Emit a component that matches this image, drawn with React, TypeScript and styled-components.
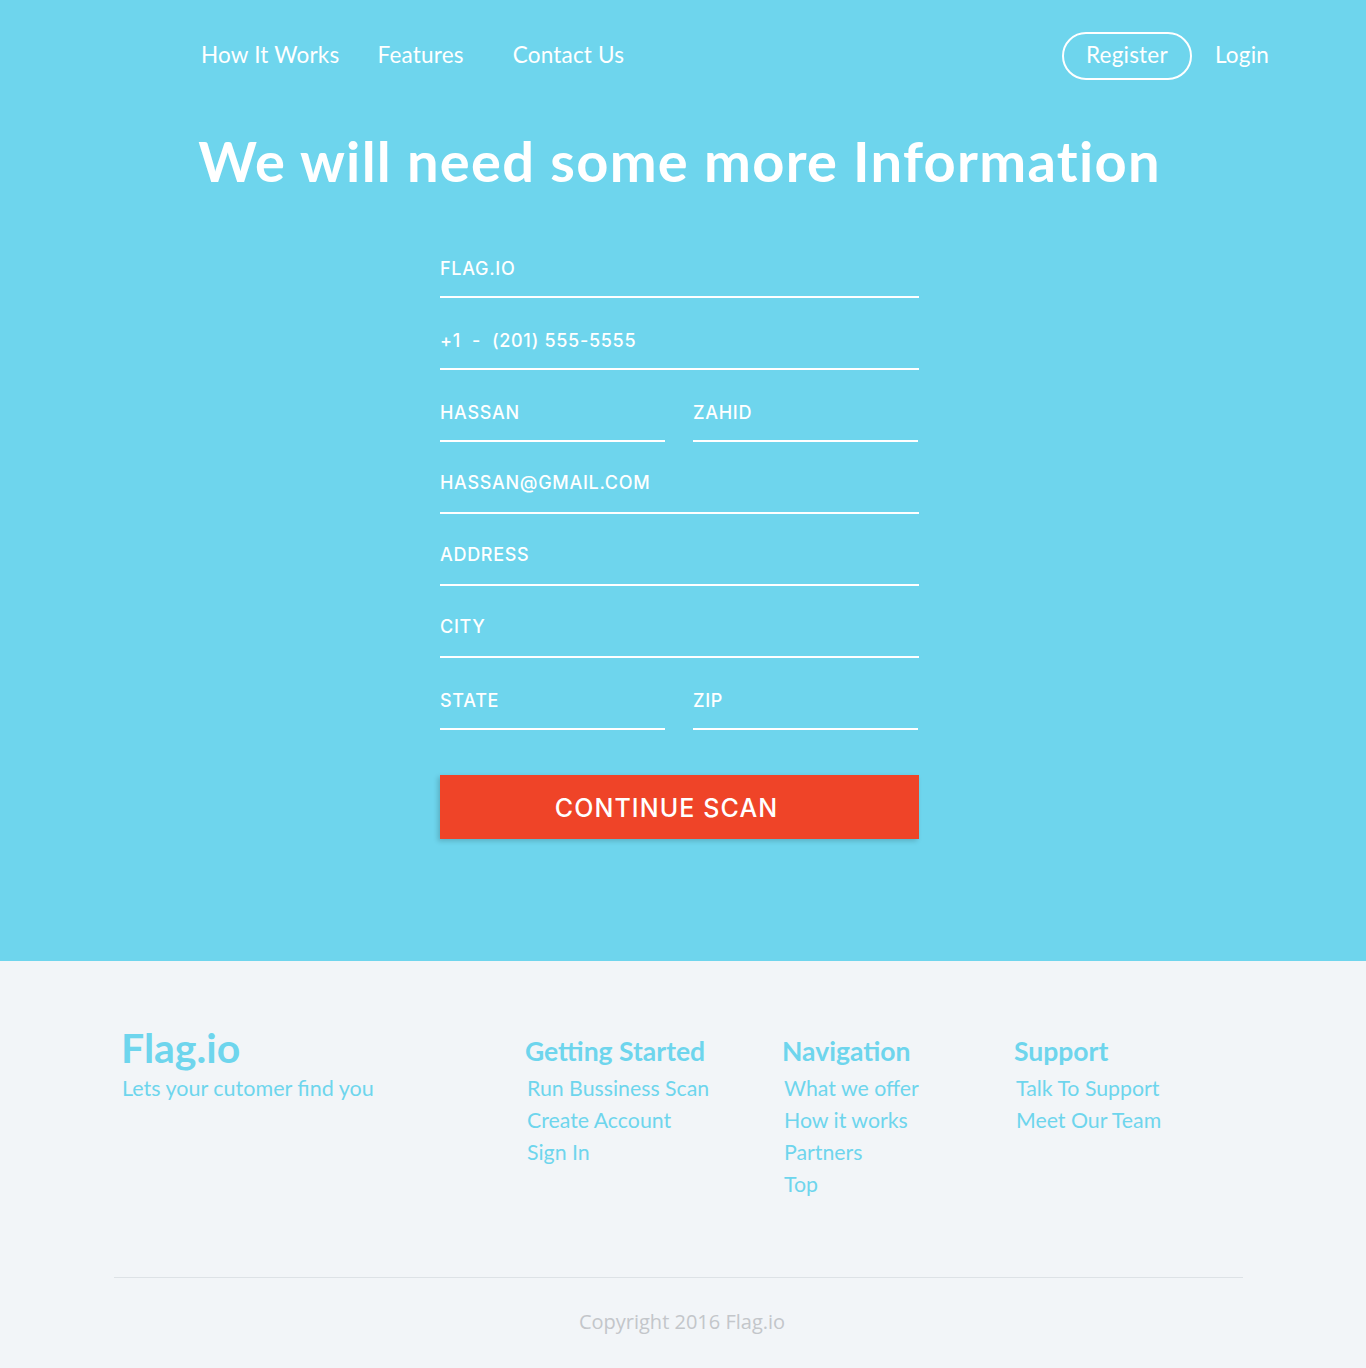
import React from "react";
import styled, { createGlobalStyle } from "styled-components";

const GlobalStyle = createGlobalStyle`
  html, body { margin: 0; padding: 0; }
  body { background: #f2f5f8; font-family: "Lato", "Liberation Sans", sans-serif; }
  * { box-sizing: border-box; }
`;

const BLUE = "#6ed5ed";

const Hero = styled.section`
  background: ${BLUE};
  height: 961px;
  display: flex;
  flex-direction: column;
`;

const Nav = styled.nav`
  display: flex;
  align-items: center;
  justify-content: space-between;
  padding: 32px 97px 0 201px;
  height: 80px;
`;

const NavGroup = styled.div`
  display: flex;
  align-items: center;
`;

const NavLink = styled.a<{ $gap?: number }>`
  color: #fff;
  font-family: "Lato", sans-serif;
  font-size: 22.5px;
  font-weight: 400;
  letter-spacing: 0.2px;
  text-decoration: none;
  margin-left: ${(p) => p.$gap ?? 0}px;
  line-height: 46px;
  padding-bottom: 2px;
`;

const RegisterButton = styled.a`
  display: inline-flex;
  align-items: center;
  justify-content: center;
  width: 130px;
  height: 48px;
  padding-bottom: 3px;
  border: 2px solid #fff;
  border-radius: 24px;
  color: #fff;
  font-family: "Lato", sans-serif;
  font-size: 22.5px;
  letter-spacing: 0.2px;
  text-decoration: none;
  margin-right: 23px;
`;

const Content = styled.div`
  display: flex;
  flex-direction: column;
  align-items: center;
  padding-right: 7px;
`;

const Title = styled.h1`
  margin: 48px 0 0;
  color: #fff;
  font-family: "Lato", sans-serif;
  font-weight: 700;
  font-size: 56px;
  line-height: 65px;
  letter-spacing: 1.3px;
`;

const Form = styled.form`
  width: 479px;
  margin-top: 33px;
  display: flex;
  flex-direction: column;
`;

const Row = styled.div`
  display: grid;
  grid-template-columns: 225px 225px;
  column-gap: 28px;
`;

const Field = styled.div<{ $pt?: number }>`
  height: 72px;
  padding-top: ${(p) => p.$pt ?? 33}px;
  border-bottom: 2px solid #fff;
  color: #fff;
  font-family: "Inter", "Liberation Sans", sans-serif;
  font-weight: 500;
  font-size: 18px;
  line-height: 20px;
  letter-spacing: 0.7px;
  white-space: pre;
`;

const Button = styled.button`
  margin-top: 45px;
  width: 479px;
  height: 64px;
  border: none;
  background: #ef4428;
  color: #fff;
  font-family: "Inter", "Liberation Sans", sans-serif;
  font-weight: 500;
  font-size: 25px;
  letter-spacing: 1.1px;
  padding: 2px 26px 0 0;
  box-shadow: -2px 2px 5px rgba(0, 0, 0, 0.18);
  cursor: pointer;
`;

const Footer = styled.footer`
  background: #f2f5f8;
  height: 407px;
  padding-top: 63px;
  display: flex;
  flex-direction: column;
`;

const FooterGrid = styled.div`
  display: grid;
  grid-template-columns: 404px 257px 232px 1fr;
  padding-left: 121px;
  height: 165px;
`;

const Brand = styled.div`
  display: flex;
  flex-direction: column;
`;

const Logo = styled.div`
  color: ${BLUE};
  font-family: "Lato", sans-serif;
  font-weight: 700;
  font-size: 41px;
  line-height: 48px;
`;

const Tagline = styled.div`
  color: ${BLUE};
  font-family: "Lato", sans-serif;
  font-size: 21.5px;
  line-height: 32px;
  padding-left: 1px;
`;

const Column = styled.div`
  display: flex;
  flex-direction: column;
  padding-top: 12px;
`;

const ColumnTitle = styled.div`
  color: ${BLUE};
  font-family: "Lato", sans-serif;
  font-weight: 700;
  font-size: 26.5px;
  line-height: 30px;
  margin-bottom: 6px;
`;

const FooterLink = styled.a`
  color: ${BLUE};
  font-family: "Lato", sans-serif;
  font-size: 21.3px;
  line-height: 32px;
  text-decoration: none;
  padding-left: 2px;
`;

const Divider = styled.hr`
  border: none;
  border-top: 1px solid #dde2e6;
  margin: 88px 123px 0 114px;
`;

const Copyright = styled.div`
  margin-top: 32px;
  text-align: center;
  color: #c3c6ca;
  font-family: "Open Sans", sans-serif;
  font-size: 20px;
  line-height: 24px;
  padding-right: 2px;
`;

const columns = [
  { title: "Getting Started", links: ["Run Bussiness Scan", "Create Account", "Sign In"] },
  { title: "Navigation", links: ["What we offer", "How it works", "Partners", "Top"] },
  { title: "Support", links: ["Talk To Support", "Meet Our Team"] },
];

export default function App() {
  return (
    <>
      <GlobalStyle />
      <Hero>
        <Nav>
          <NavGroup>
            <NavLink>How It Works</NavLink>
            <NavLink $gap={38}>Features</NavLink>
            <NavLink $gap={49}>Contact Us</NavLink>
          </NavGroup>
          <NavGroup>
            <RegisterButton>Register</RegisterButton>
            <NavLink>Login</NavLink>
          </NavGroup>
        </Nav>
        <Content>
          <Title>We will need some more Information</Title>
          <Form>
            <Field>FLAG.IO</Field>
            <Field>{"+1  -  (201) 555-5555"}</Field>
            <Row>
              <Field>HASSAN</Field>
              <Field>ZAHID</Field>
            </Row>
            <Field $pt={31}>HASSAN@GMAIL.COM</Field>
            <Field $pt={31}>ADDRESS</Field>
            <Field $pt={31}>CITY</Field>
            <Row>
              <Field>STATE</Field>
              <Field>ZIP</Field>
            </Row>
            <Button type="button">CONTINUE SCAN</Button>
          </Form>
        </Content>
      </Hero>
      <Footer>
        <FooterGrid>
          <Brand>
            <Logo>Flag.io</Logo>
            <Tagline>Lets your cutomer find you</Tagline>
          </Brand>
          {columns.map((c) => (
            <Column key={c.title}>
              <ColumnTitle>{c.title}</ColumnTitle>
              {c.links.map((l) => (
                <FooterLink key={l}>{l}</FooterLink>
              ))}
            </Column>
          ))}
        </FooterGrid>
        <Divider />
        <Copyright>Copyright 2016 Flag.io</Copyright>
      </Footer>
    </>
  );
}
